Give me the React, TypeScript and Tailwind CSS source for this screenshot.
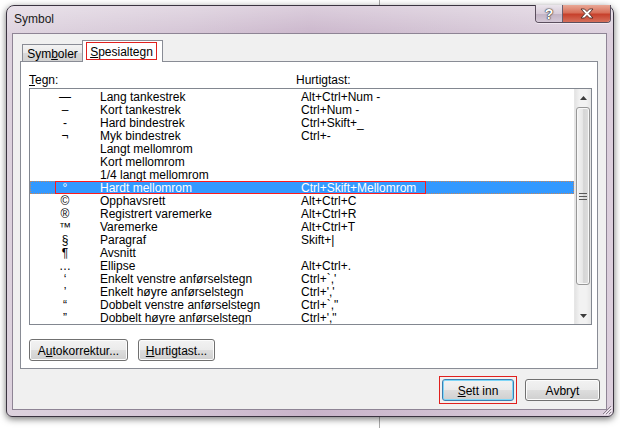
import React from 'react';

type Row = { sym: string; name: string; keys: string };

const rows: Row[] = [
    { sym: '—', name: 'Lang tankestrek', keys: 'Alt+Ctrl+Num -' },
    { sym: '–', name: 'Kort tankestrek', keys: 'Ctrl+Num -' },
    { sym: '-', name: 'Hard bindestrek', keys: 'Ctrl+Skift+_' },
    { sym: '¬', name: 'Myk bindestrek', keys: 'Ctrl+-' },
    { sym: '', name: 'Langt mellomrom', keys: '' },
    { sym: '', name: 'Kort mellomrom', keys: '' },
    { sym: '', name: '1/4 langt mellomrom', keys: '' },
    { sym: '°', name: 'Hardt mellomrom', keys: 'Ctrl+Skift+Mellomrom' },
    { sym: '©', name: 'Opphavsrett', keys: 'Alt+Ctrl+C' },
    { sym: '®', name: 'Registrert varemerke', keys: 'Alt+Ctrl+R' },
    { sym: '™', name: 'Varemerke', keys: 'Alt+Ctrl+T' },
    { sym: '§', name: 'Paragraf', keys: 'Skift+|' },
    { sym: '¶', name: 'Avsnitt', keys: '' },
    { sym: '…', name: 'Ellipse', keys: 'Alt+Ctrl+.' },
    { sym: '‘', name: 'Enkelt venstre anførselstegn', keys: "Ctrl+`,'" },
    { sym: '’', name: 'Enkelt høyre anførselstegn', keys: "Ctrl+','" },
    { sym: '“', name: 'Dobbelt venstre anførselstegn', keys: 'Ctrl+`,"' },
    { sym: '”', name: 'Dobbelt høyre anførselstegn', keys: "Ctrl+',\"" },
];

const SELECTED = 7;

const btn =
    'h-[22px] pt-[1px] rounded-[3px] border border-[#707070] bg-[linear-gradient(180deg,#f2f2f2_0%,#ebebeb_48%,#dddddd_52%,#cfcfcf_100%)] shadow-[inset_0_0_0_1px_#fcfcfc] flex items-center justify-center text-black';

const Arrow = ({ up }: { up?: boolean }) => (
    <svg width="7" height="4" viewBox="0 0 7 4">
        <path d={up ? 'M0 4 L3.5 0 L7 4 Z' : 'M0 0 L3.5 4 L7 0 Z'} fill="#3c3c3c" />
    </svg>
);

const ScrollBar = () => (
    <div className="w-[17px] shrink-0 flex flex-col border-l border-[#e6e6e6] bg-[linear-gradient(90deg,#e3e3e3,#f2f2f2_30%,#f2f2f2_70%,#e6e6e6)]">
        <div className="h-[18px] flex items-center justify-center">
            <Arrow up />
        </div>
        <div className="h-[178px] mx-[1px] rounded-[3px] border border-[#979797] bg-[linear-gradient(90deg,#f4f4f4,#e8e8e8_45%,#d6d6d6_55%,#dedede)] shadow-[inset_0_0_0_1px_#f8f8f8] flex items-center justify-center">
            <svg width="8" height="7" viewBox="0 0 8 7">
                <path d="M0 0.5 H8 M0 3.5 H8 M0 6.5 H8" stroke="#5a5a5a" strokeWidth="1" />
            </svg>
        </div>
        <div className="flex-1" />
        <div className="h-[17px] flex items-center justify-center">
            <Arrow />
        </div>
    </div>
);

const CharList = () => (
    <div className="ml-[8px] mr-[5px] h-[237px] border border-[#828790] bg-white flex overflow-hidden">
        <div className="flex-1 pt-[1px]">
            {rows.map((r, i) => {
                const sel = i === SELECTED;
                return (
                    <div
                        key={r.name}
                        className={`relative h-[13px] leading-[15px] grid grid-cols-[70px_201px_1fr] ${sel ? 'bg-[#3399ff] text-white' : 'text-black'}`}
                    >
                        <span className="text-center">{r.sym}</span>
                        <span className="whitespace-nowrap">{r.name}</span>
                        <span className="whitespace-nowrap">{r.keys}</span>
                        {sel && (
                            <>
                                <div className="absolute inset-0 border border-dotted border-[#c8875a]" />
                                <div className="absolute z-10 left-[25px] top-0 w-[371px] h-[13px] border border-[#ff1a1a]" />
                            </>
                        )}
                    </div>
                );
            })}
        </div>
        <ScrollBar />
    </div>
);

const CaptionButtons = () => (
    <div className="flex h-[18px] -mt-[1px] rounded-b-[4px] border border-t-0 border-[#5b4f5e] overflow-hidden shadow-[0_1px_0_#f0e8f0]">
        <div className="w-[27px] flex items-center justify-center border-r border-[#6b5f6e] bg-[linear-gradient(180deg,#ebe5ec,#d8ccd9_50%,#c3b4c5_55%,#d4c8d6)]">
            <span className="text-[14px] font-bold leading-none text-white [text-shadow:0_0_1px_#2a2a2a,0_0_1px_#2a2a2a,0_0_2px_#444]">?</span>
        </div>
        <div className="w-[47px] flex items-center justify-center bg-[linear-gradient(180deg,#e9a896,#d8705a_45%,#c7412c_55%,#d66f5b)]">
            <svg width="14" height="11" viewBox="0 0 14 11">
                <path
                    d="M1 1 H4.5 L7 3.6 L9.5 1 H13 L9 5.5 L13 10 H9.5 L7 7.4 L4.5 10 H1 L5 5.5 Z"
                    fill="#ffffff"
                    stroke="#4a2a26"
                    strokeWidth="0.9"
                    strokeLinejoin="round"
                />
            </svg>
        </div>
    </div>
);

export default function App() {
    return (
        <div className="relative w-[620px] h-[428px] overflow-hidden bg-white pt-[5px] pl-[6px] font-['Liberation_Sans',Arial,sans-serif] text-[12px]">
            {/* desktop line behind the dialog */}
            <div className="absolute left-[379px] top-0 w-px h-full bg-[#a9a9a9]" />

            <div className="relative w-[608px] h-[412px] flex flex-col rounded-t-[8px] rounded-b-[6px] border border-[#3a3340] bg-[linear-gradient(90deg,#ddd2de_0%,#d3c3d4_30%,#c9b4ca_50%,#d2c2d3_75%,#dccfdd_100%)] shadow-[0_2px_7px_rgba(0,0,0,0.55)]">
                {/* title bar */}
                <div className="h-[27px] flex items-start shrink-0 rounded-t-[7px] bg-[linear-gradient(180deg,rgba(255,255,255,0.35),rgba(255,255,255,0.05))]">
                    <span className="pl-[7px] pt-[6px] leading-[15px] text-[#1a1a1a]">Symbol</span>
                    <div className="ml-auto mr-[2px]">
                        <CaptionButtons />
                    </div>
                </div>

                {/* client area */}
                <div className="ml-[5px] mr-[6px] mb-[6px] h-[377px] border border-[#8e8495] bg-[#f0f0f0] flex flex-col">
                    {/* tabs */}
                    <div className="mt-[7px] ml-[7px] h-[21px] flex items-end relative z-10 -mb-[1px]">
                        <div className="ml-[2px] mb-[1px] w-[61px] h-[17px] pt-[2px] border border-b-0 border-[#898c95] bg-[linear-gradient(180deg,#f3f3f3,#e9e9e9_50%,#d9d9d9_51%,#d2d2d2)] flex items-center justify-center leading-none text-black">
                            <span>Sym<span className="underline">b</span>oler</span>
                        </div>
                        <div className="-ml-[1px] w-[81px] h-[22px] border border-b-0 border-[#898c95] bg-white pl-[3px] pt-[1px]">
                            <div className="w-[71px] h-[18px] pt-[2px] border border-[#e0201e] flex items-center justify-center leading-none text-black">
                                <span><span className="underline">S</span>pesialtegn</span>
                            </div>
                        </div>
                    </div>

                    {/* tab panel */}
                    <div className="ml-[7px] mr-[8px] h-[308px] border border-[#898c95] bg-white flex flex-col">
                        <div className="h-[26px] pt-[11px] pl-[8px] flex leading-[15px] text-black">
                            <span className="w-[267px]">
                                <span className="underline">T</span>egn:
                            </span>
                            <span>Hurtigtast:</span>
                        </div>
                        <CharList />
                        <div className="mt-[14px] ml-[8px] flex gap-[10px]">
                            <div className={`${btn} w-[99px]`}>
                                <span>A<span className="underline">u</span>tokorrektur...</span>
                            </div>
                            <div className={`${btn} w-[77px]`}>
                                <span><span className="underline">H</span>urtigtast...</span>
                            </div>
                        </div>
                    </div>

                    {/* dialog buttons */}
                    <div className="mt-[7px] mr-[6px] flex items-center justify-end">
                        <div className="border border-[#e0201e] p-[2px]">
                            <div className="w-[72px] h-[22px] pt-[1px] rounded-[3px] border border-[#3c7fb1] bg-[linear-gradient(180deg,#f2f2f2_0%,#ebebeb_48%,#dddddd_52%,#cfcfcf_100%)] shadow-[inset_0_0_0_1px_#7fd6f7] flex items-center justify-center text-black">
                                <span><span className="underline">S</span>ett inn</span>
                            </div>
                        </div>
                        <div className={`${btn} w-[75px] ml-[8px]`}>Avbryt</div>
                    </div>
                </div>

                {/* resize grip */}
                <svg className="absolute right-[1px] bottom-[1px]" width="11" height="11" viewBox="0 0 11 11">
                    <path d="M10 2 L2 10 M10 5 L5 10 M10 8 L8 10" stroke="#8a7f8c" strokeWidth="1" />
                    <path d="M11 3 L3 11 M11 6 L6 11 M11 9 L9 11" stroke="#f4eef4" strokeWidth="1" />
                </svg>
            </div>
        </div>
    );
}
